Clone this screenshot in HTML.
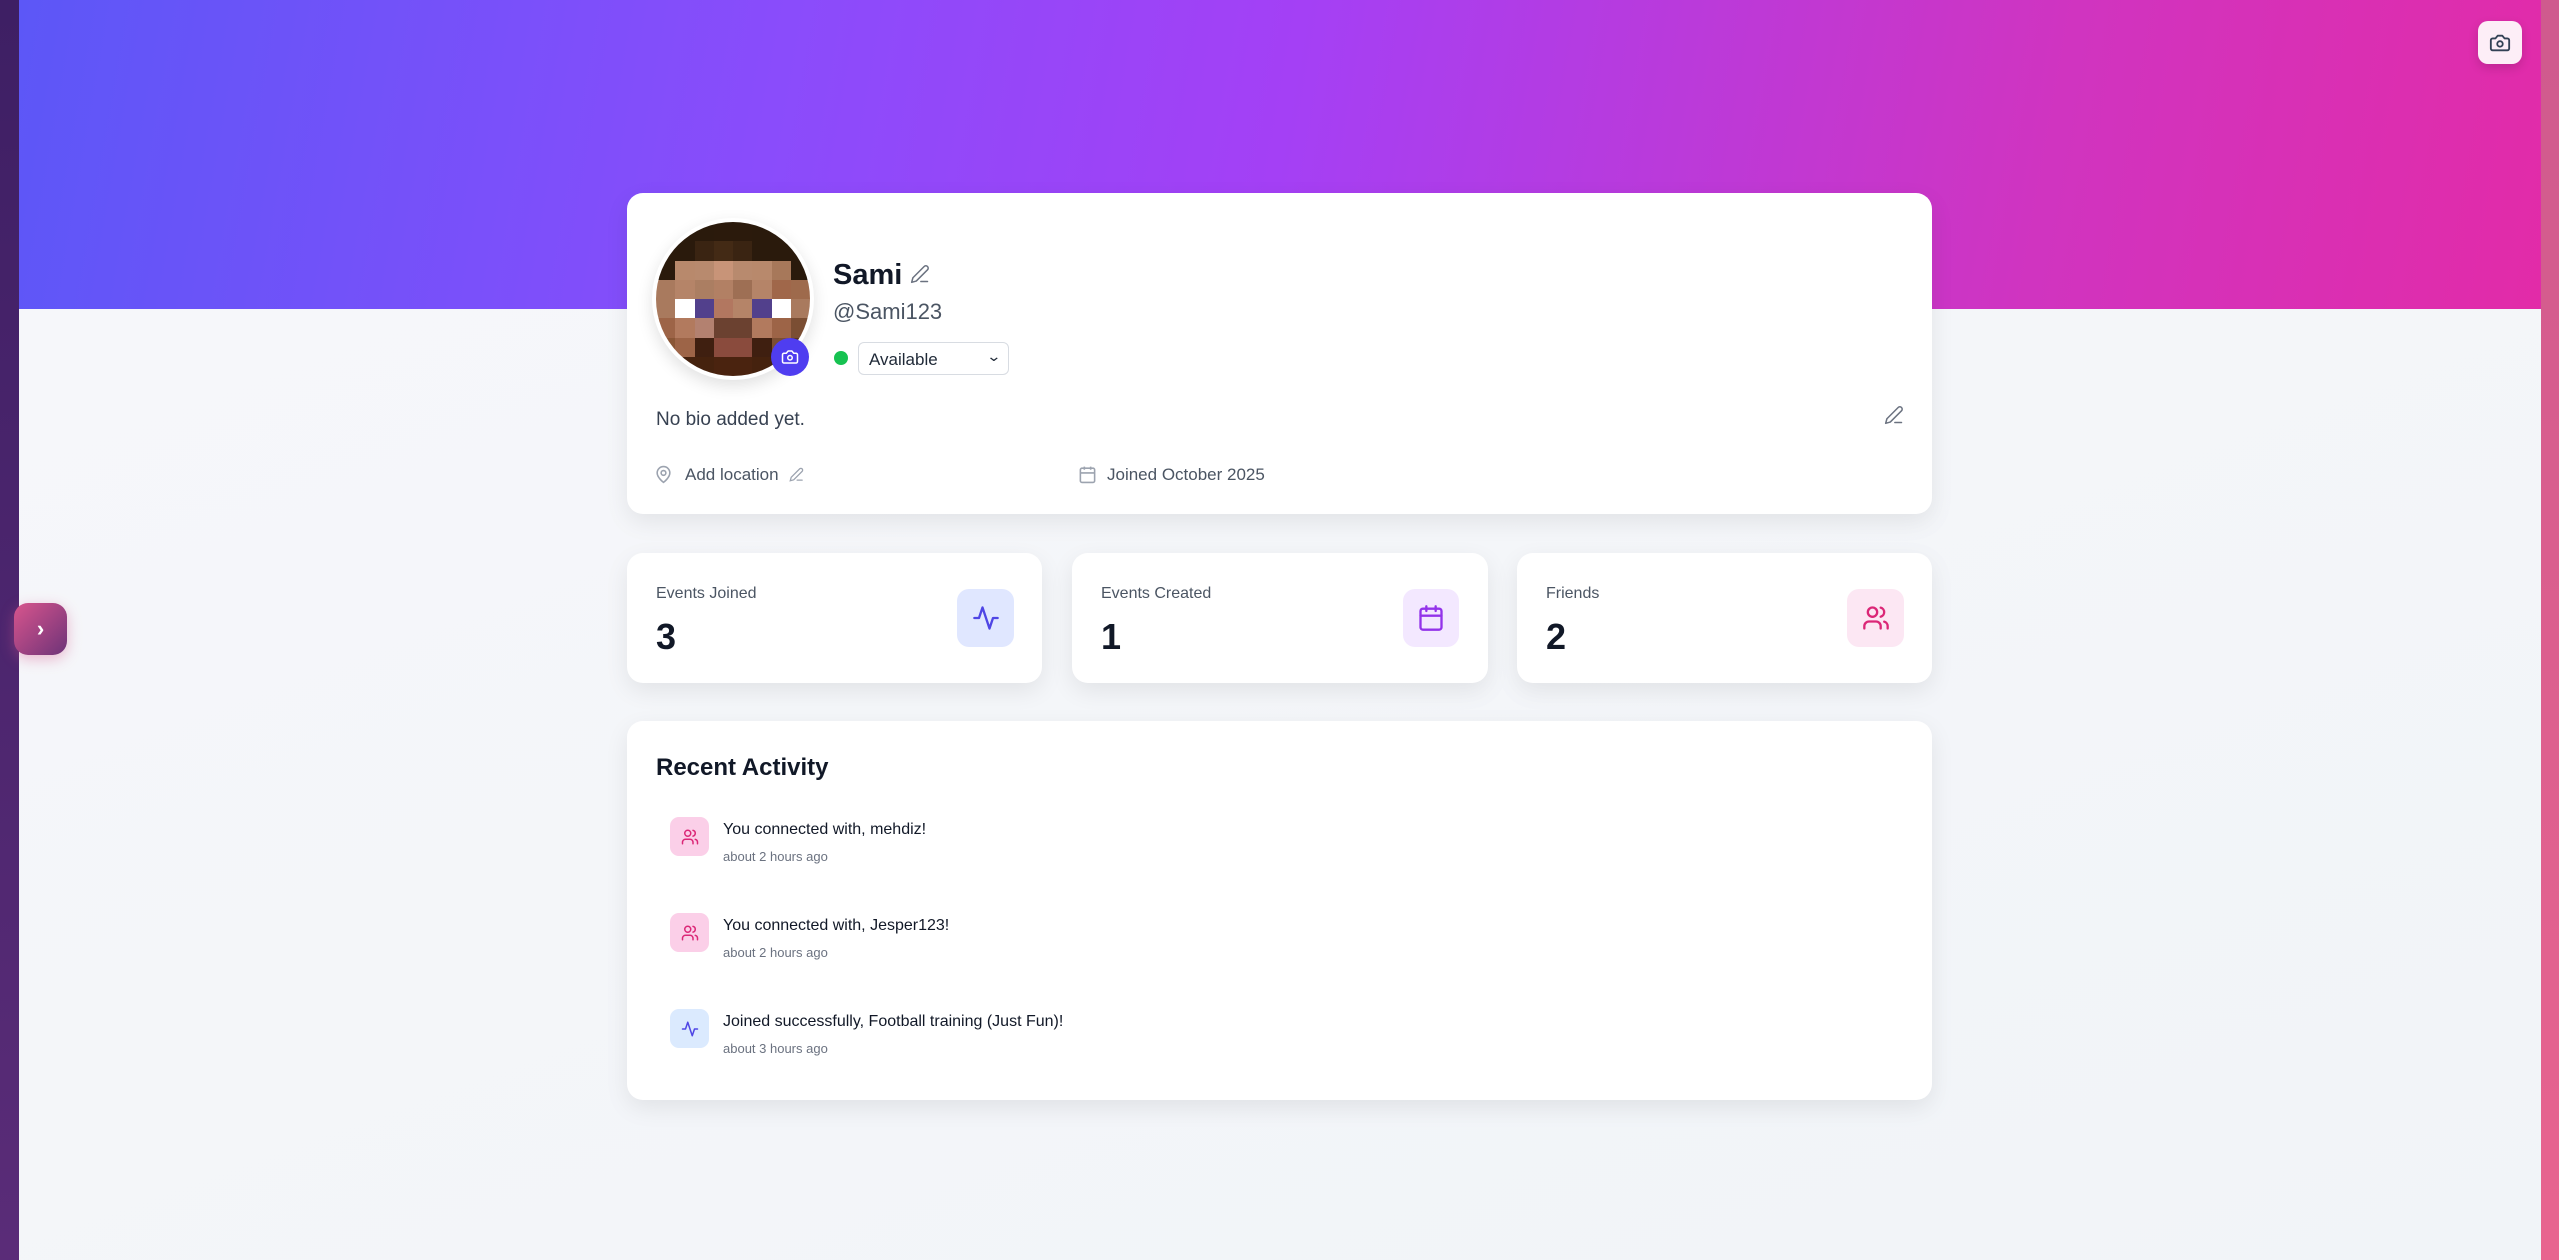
<!DOCTYPE html>
<html><head><meta charset="utf-8"><style>
*{box-sizing:border-box;margin:0;padding:0}
body{width:2559px;height:1260px;overflow:hidden;font-family:"Liberation Sans",sans-serif;background:#f3f5f8;position:relative}
.lstrip{position:absolute;left:0;top:0;width:19px;height:1260px;background:linear-gradient(#3e1f64,#5a2c78)}
.rstrip{position:absolute;right:0;top:0;width:18px;height:1260px;background:linear-gradient(#cf5a8e,#e8648f)}
.banner{position:absolute;left:19px;top:0;width:2522px;height:309px;background:linear-gradient(100deg,#5c57f7 0%,#8a4cfb 30%,#a440f5 50%,#d034c0 80%,#e22ba8 100%)}
.main{position:absolute;left:19px;top:309px;width:2522px;height:951px;background:linear-gradient(160deg,#f6f7fa,#f1f4f8)}
.cam{position:absolute;left:2478px;top:21px;width:44px;height:43px;border-radius:10px;background:#fdeef7;box-shadow:0 4px 10px rgba(0,0,0,.15);display:flex;align-items:center;justify-content:center}
.tog{position:absolute;left:14px;top:603px;width:53px;height:52px;border-radius:14px;background:linear-gradient(135deg,#d8558d,#6e3378);box-shadow:0 4px 14px rgba(216,85,141,.4);color:#fff;font-size:22px;display:flex;align-items:center;justify-content:center;font-weight:bold}
.card{position:absolute;background:#fff;border-radius:16px;box-shadow:0 8px 24px rgba(0,0,0,.08)}
.av{position:absolute;left:652px;top:218px;width:162px;height:162px;border-radius:50%;background:#fff;box-shadow:0 6px 16px rgba(0,0,0,.12);padding:4px}
.grid{width:154px;height:154px;border-radius:50%;overflow:hidden;display:grid;grid-template-columns:repeat(8,1fr);grid-template-rows:repeat(8,1fr)}
.badge{position:absolute;left:771px;top:338px;width:38px;height:38px;border-radius:50%;background:#4f3df0;display:flex;align-items:center;justify-content:center}
.t{position:absolute;white-space:nowrap}
.ib{position:absolute;border-radius:12px;display:flex;align-items:center;justify-content:center}
</style></head><body>
<div class="lstrip"></div><div class="rstrip"></div>
<div class="banner"></div><div class="main"></div>
<div class="cam"><svg width="22" height="22" viewBox="0 0 24 24" fill="none" stroke="#334155" stroke-width="2" stroke-linecap="round" stroke-linejoin="round"><path d="M14.5 4h-5L7 7H4a2 2 0 0 0-2 2v9a2 2 0 0 0 2 2h16a2 2 0 0 0 2-2V9a2 2 0 0 0-2-2h-3z"/><circle cx="12" cy="13" r="3"/></svg></div>
<div class="tog">›</div>

<div class="card" style="left:627px;top:193px;width:1305px;height:321px"></div>
<div class="av"><div class="grid">
<div style="background:#2a1a0c"></div><div style="background:#2a1a0c"></div><div style="background:#2a1a0c"></div><div style="background:#2b1a0c"></div><div style="background:#2b1a0c"></div><div style="background:#2a1a0c"></div><div style="background:#2a1a0c"></div><div style="background:#2a1a0c"></div>
<div style="background:#2a1a0c"></div><div style="background:#2a1a0c"></div><div style="background:#3a2412"></div><div style="background:#432a15"></div><div style="background:#3a2412"></div><div style="background:#2a1a0c"></div><div style="background:#2a1a0c"></div><div style="background:#2a1a0c"></div>
<div style="background:#2a1a0c"></div><div style="background:#b8896c"></div><div style="background:#b88a6e"></div><div style="background:#c89478"></div><div style="background:#b88a6e"></div><div style="background:#b8896c"></div><div style="background:#a7785a"></div><div style="background:#2a1a0c"></div>
<div style="background:#a97a5e"></div><div style="background:#b58468"></div><div style="background:#ab7e62"></div><div style="background:#b28064"></div><div style="background:#9e6f54"></div><div style="background:#b58468"></div><div style="background:#a0674a"></div><div style="background:#9e6a4c"></div>
<div style="background:#a97a5e"></div><div style="background:#fff"></div><div style="background:#52408c"></div><div style="background:#b27760"></div><div style="background:#b58468"></div><div style="background:#52408c"></div><div style="background:#fff"></div><div style="background:#a97a5e"></div>
<div style="background:#9d6447"></div><div style="background:#b27a5e"></div><div style="background:#b38170"></div><div style="background:#6b4130"></div><div style="background:#6b4130"></div><div style="background:#b27a5e"></div><div style="background:#9d6447"></div><div style="background:#7b4e33"></div>
<div style="background:#8a5636"></div><div style="background:#9d6447"></div><div style="background:#3f1f10"></div><div style="background:#8a4b3d"></div><div style="background:#8a4b3d"></div><div style="background:#3f1f10"></div><div style="background:#7b4e33"></div><div style="background:#5a3520"></div>
<div style="background:#5a3520"></div><div style="background:#45220e"></div><div style="background:#45220e"></div><div style="background:#4a230f"></div><div style="background:#4a230f"></div><div style="background:#45220e"></div><div style="background:#45220e"></div><div style="background:#5a3520"></div>
</div></div>
<div class="badge"><svg width="18" height="18" viewBox="0 0 24 24" fill="none" stroke="#fff" stroke-width="2" stroke-linecap="round" stroke-linejoin="round"><path d="M14.5 4h-5L7 7H4a2 2 0 0 0-2 2v9a2 2 0 0 0 2 2h16a2 2 0 0 0 2-2V9a2 2 0 0 0-2-2h-3z"/><circle cx="12" cy="13" r="3"/></svg></div>

<div class="t" style="left:833px;top:259px;font-size:29px;font-weight:bold;color:#111827">Sami</div>
<svg class="t" style="left:910px;top:264px" width="20" height="20" viewBox="0 0 24 24" fill="none" stroke="#6b7280" stroke-width="1.8" stroke-linecap="round" stroke-linejoin="round"><path d="M17 3a2.8 2.8 0 1 1 4 4L7.5 20.5 2 22l1.5-5.5z"/><path d="M13 21h8"/></svg>
<div class="t" style="left:833px;top:299px;font-size:22px;color:#4b5563">@Sami123</div>
<div class="t" style="left:834px;top:351px;width:14px;height:14px;border-radius:50%;background:#16c251"></div>
<div class="t" style="left:858px;top:342px;width:151px;height:33px;border:1px solid #d8dce2;border-radius:6px;background:#fff;font-size:17px;color:#1f2937;padding:7px 0 0 10px">Available<span style="position:absolute;right:8px;top:5px;font-size:14px;transform:scaleX(1.3)">⌄</span></div>
<div class="t" style="left:656px;top:409px;font-size:19px;color:#374151">No bio added yet.</div>
<svg class="t" style="left:1884px;top:405px" width="20" height="20" viewBox="0 0 24 24" fill="none" stroke="#6b7280" stroke-width="1.8" stroke-linecap="round" stroke-linejoin="round"><path d="M17 3a2.8 2.8 0 1 1 4 4L7.5 20.5 2 22l1.5-5.5z"/><path d="M13 21h8"/></svg>
<svg class="t" style="left:654px;top:464px" width="19" height="21" viewBox="0 0 24 24" fill="none" stroke="#9ca3af" stroke-width="2"><path d="M20 10c0 6-8 12-8 12s-8-6-8-12a8 8 0 0 1 16 0z"/><circle cx="12" cy="10" r="3"/></svg>
<div class="t" style="left:685px;top:465px;font-size:17px;color:#4b5563">Add location</div>
<svg class="t" style="left:789px;top:467px" width="15" height="15" viewBox="0 0 24 24" fill="none" stroke="#9ca3af" stroke-width="2" stroke-linecap="round"><path d="M17 3a2.8 2.8 0 1 1 4 4L7.5 20.5 2 22l1.5-5.5z"/><path d="M13 21h8"/></svg>
<svg class="t" style="left:1078px;top:464px" width="19" height="21" viewBox="0 0 24 24" fill="none" stroke="#9ca3af" stroke-width="2"><rect x="3" y="4" width="18" height="18" rx="2"/><path d="M16 2v4M8 2v4M3 10h18"/></svg>
<div class="t" style="left:1107px;top:465px;font-size:17px;color:#4b5563">Joined October 2025</div>

<div class="card" style="left:627px;top:553px;width:415px;height:130px"></div>
<div class="card" style="left:1072px;top:553px;width:416px;height:130px"></div>
<div class="card" style="left:1517px;top:553px;width:415px;height:130px"></div>
<div class="t" style="left:656px;top:585px;font-size:16px;color:#4b5563">Events Joined</div>
<div class="t" style="left:656px;top:616px;font-size:36px;font-weight:bold;color:#111827">3</div>
<div class="ib" style="left:957px;top:589px;width:57px;height:58px;background:#e0e7ff"><svg width="28" height="28" viewBox="0 0 24 24" fill="none" stroke="#4f46e5" stroke-width="2" stroke-linecap="round" stroke-linejoin="round"><path d="M22 12h-4l-3 9L9 3l-3 9H2"/></svg></div>
<div class="t" style="left:1101px;top:585px;font-size:16px;color:#4b5563">Events Created</div>
<div class="t" style="left:1101px;top:616px;font-size:36px;font-weight:bold;color:#111827">1</div>
<div class="ib" style="left:1403px;top:589px;width:56px;height:58px;background:#f3e8ff"><svg width="28" height="28" viewBox="0 0 24 24" fill="none" stroke="#9333ea" stroke-width="2" stroke-linecap="round"><rect x="3" y="4" width="18" height="18" rx="2"/><path d="M16 2v4M8 2v4M3 10h18"/></svg></div>
<div class="t" style="left:1546px;top:585px;font-size:16px;color:#4b5563">Friends</div>
<div class="t" style="left:1546px;top:616px;font-size:36px;font-weight:bold;color:#111827">2</div>
<div class="ib" style="left:1847px;top:589px;width:57px;height:58px;background:#fce7f3"><svg width="28" height="28" viewBox="0 0 24 24" fill="none" stroke="#db2777" stroke-width="2" stroke-linecap="round"><path d="M16 21v-2a4 4 0 0 0-4-4H6a4 4 0 0 0-4 4v2"/><circle cx="9" cy="7" r="4"/><path d="M22 21v-2a4 4 0 0 0-3-3.870M16 3.13a4 4 0 0 1 0 7.75"/></svg></div>

<div class="card" style="left:627px;top:721px;width:1305px;height:379px"></div>
<div class="t" style="left:656px;top:754px;font-size:24px;font-weight:bold;color:#111827">Recent Activity</div>

<div class="ib" style="left:670px;top:817px;width:39px;height:39px;background:#fbcfe8;border-radius:9px"><svg width="18" height="18" viewBox="0 0 24 24" fill="none" stroke="#db2777" stroke-width="2" stroke-linecap="round"><path d="M16 21v-2a4 4 0 0 0-4-4H6a4 4 0 0 0-4 4v2"/><circle cx="9" cy="7" r="4"/><path d="M22 21v-2a4 4 0 0 0-3-3.87M16 3.13a4 4 0 0 1 0 7.75"/></svg></div>
<div class="t" style="left:723px;top:821px;font-size:16px;color:#111827">You connected with, mehdiz!</div>
<div class="t" style="left:723px;top:849px;font-size:13px;color:#6b7280">about 2 hours ago</div>

<div class="ib" style="left:670px;top:913px;width:39px;height:39px;background:#fbcfe8;border-radius:9px"><svg width="18" height="18" viewBox="0 0 24 24" fill="none" stroke="#db2777" stroke-width="2" stroke-linecap="round"><path d="M16 21v-2a4 4 0 0 0-4-4H6a4 4 0 0 0-4 4v2"/><circle cx="9" cy="7" r="4"/><path d="M22 21v-2a4 4 0 0 0-3-3.87M16 3.13a4 4 0 0 1 0 7.75"/></svg></div>
<div class="t" style="left:723px;top:917px;font-size:16px;color:#111827">You connected with, Jesper123!</div>
<div class="t" style="left:723px;top:945px;font-size:13px;color:#6b7280">about 2 hours ago</div>

<div class="ib" style="left:670px;top:1009px;width:39px;height:39px;background:#dbeafe;border-radius:9px"><svg width="18" height="18" viewBox="0 0 24 24" fill="none" stroke="#4f46e5" stroke-width="2" stroke-linecap="round" stroke-linejoin="round"><path d="M22 12h-4l-3 9L9 3l-3 9H2"/></svg></div>
<div class="t" style="left:723px;top:1013px;font-size:16px;color:#111827">Joined successfully, Football training (Just Fun)!</div>
<div class="t" style="left:723px;top:1041px;font-size:13px;color:#6b7280">about 3 hours ago</div>
</body></html>
